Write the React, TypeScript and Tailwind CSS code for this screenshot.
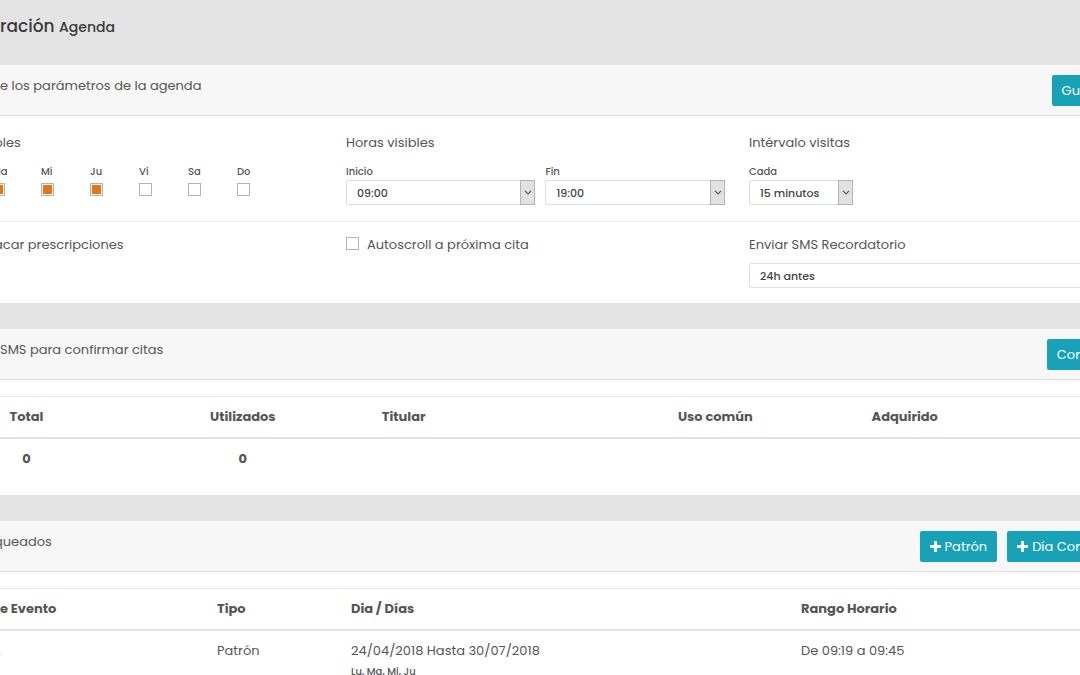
import React from 'react';

interface Day {
  id: string;
  label: string;
  checked: boolean;
}

interface SelectBoxProps {
  id: string;
  value: string;
  arrow?: boolean;
  className?: string;
}

interface CardHeaderProps {
  title: string;
  titleClass?: string;
  children: React.ReactNode;
}

const days: Day[] = [
  { id: 'ma', label: 'Ma', checked: true },
  { id: 'mi', label: 'Mi', checked: true },
  { id: 'ju', label: 'Ju', checked: true },
  { id: 'vi', label: 'Vi', checked: false },
  { id: 'sa', label: 'Sa', checked: false },
  { id: 'do', label: 'Do', checked: false },
];

const checkboxClass =
  'block size-[13px] shrink-0 appearance-none border border-[#b4b4b4] bg-white p-px checked:bg-[#ee720e] checked:bg-clip-content';

const labelClass = 'block text-[10px] leading-[17px] font-medium';

const SelectBox: React.FC<SelectBoxProps> = ({ id, value, arrow = true, className = '' }) => (
  <div className={`relative ${className}`}>
    <select
      id={id}
      defaultValue={value}
      className="block h-[25px] w-full appearance-none rounded-xs border border-[#d9dfe2] bg-white pl-[10px] text-[11px] font-medium text-[#444]"
    >
      <option>{value}</option>
    </select>
    {arrow && (
      <span className="pointer-events-none absolute inset-y-0 right-0 flex w-[15px] items-center justify-center border border-[#b2b4b6] bg-[#e1e1e1]">
        <svg width="8" height="5" viewBox="0 0 8 5" fill="none" stroke="#555" strokeWidth="1.2" className="shrink-0">
          <path d="M1 .8l3 3 3-3" />
        </svg>
      </span>
    )}
  </div>
);

const PlusIcon = () => (
  <svg width="11" height="11" viewBox="0 0 11 11" fill="currentColor" className="shrink-0">
    <path d="M4.7 0h1.6q.7 0 .7.7V4h3.3q.7 0 .7.7v1.6q0 .7-.7.7H7v3.3q0 .7-.7.7H4.7q-.7 0-.7-.7V7H.7Q0 7 0 6.3V4.7Q0 4 .7 4H4V.7Q4 0 4.7 0z" />
  </svg>
);

const buttonClass = 'flex h-[31px] items-center gap-1 bg-[#18a2b8] text-[13px] whitespace-nowrap text-white';

const CardHeader: React.FC<CardHeaderProps> = ({ title, titleClass = '', children }) => (
  <header className="flex items-start justify-between border-b border-[#dedfe0] bg-[#f7f7f7] pt-[10px] pb-[9px]">
    <h2 className={`pt-px ${titleClass}`}>{title}</h2>
    <div className="flex gap-[10px]">{children}</div>
  </header>
);

const App: React.FC = () => {
  return (
    <main className="flex h-screen flex-col gap-[26px] overflow-hidden bg-[#e4e4e4] font-['Poppins','Inter',sans-serif] text-[13px] leading-5 text-[#555]">
      <h1 className="-mb-[26px] shrink-0 pt-[13px] pb-[25px] text-[17px] leading-[27px] font-medium text-[#3a3a3a]">
        ración <small className="text-sm font-medium">Agenda</small>
      </h1>

      <section className="shrink-0 bg-white">
        <CardHeader title="e los parámetros de la agenda">
          <button type="button" className={`${buttonClass} rounded-l-xs pl-[10px]`}>Gu</button>
        </CardHeader>

        <div className="grid grid-cols-[346fr_403fr_331fr] border-b border-[#ebebeb] pt-[17px] pb-4">
          <fieldset>
            <legend className="-ml-[6px]">bles</legend>
            <div className="-ml-2 flex pt-[10px]">
              {days.map((day) => (
                <div key={day.id} className="w-[49px]">
                  <label htmlFor={day.id} className={labelClass}>{day.label}</label>
                  <input id={day.id} type="checkbox" defaultChecked={day.checked} className={`${checkboxClass} mt-[3px]`} />
                </div>
              ))}
            </div>
          </fieldset>
          <fieldset>
            <legend>Horas visibles</legend>
            <div className="flex gap-[10px] pt-[10px] pr-6">
              <div className="flex-[19]">
                <label htmlFor="inicio" className={labelClass}>Inicio</label>
                <SelectBox id="inicio" value="09:00" />
              </div>
              <div className="flex-[18]">
                <label htmlFor="fin" className={labelClass}>Fin</label>
                <SelectBox id="fin" value="19:00" />
              </div>
            </div>
          </fieldset>
          <fieldset>
            <legend>Intérvalo visitas</legend>
            <div className="pt-[10px]">
              <label htmlFor="cada" className={labelClass}>Cada</label>
              <SelectBox id="cada" value="15 minutos" className="w-[104px]" />
            </div>
          </fieldset>
        </div>

        <div className="grid grid-cols-[346fr_403fr_331fr] pt-[13px] pb-[15px]">
          <p className="-ml-[6px]">acar prescripciones</p>
          <div className="flex items-start gap-2">
            <input id="autoscroll" type="checkbox" className={`${checkboxClass} mt-[2px]`} />
            <label htmlFor="autoscroll">Autoscroll a próxima cita</label>
          </div>
          <div>
            <label htmlFor="sms" className="block pb-2">Enviar SMS Recordatorio</label>
            <SelectBox id="sms" value="24h antes" arrow={false} className="-mr-1" />
          </div>
        </div>
      </section>

      <section className="shrink-0 bg-white">
        <CardHeader title="SMS para confirmar citas">
          <button type="button" className={`${buttonClass} rounded-l-xs pl-[10px]`}>Cor</button>
        </CardHeader>
        <div className="-ml-[59px] pt-4 pb-4">
          <table className="w-full table-fixed">
            <thead>
              <tr className="border-t border-b-2 border-t-[#e9e9e9] border-b-[#e2e4e6] text-left">
                <th className="w-[15%] py-[10px] text-center font-bold">Total</th>
                <th className="w-[23%] text-center font-bold">Utilizados</th>
                <th className="w-[26%] pl-2 font-bold">Titular</th>
                <th className="w-[17%] pl-2 font-bold">Uso común</th>
                <th className="pl-2 font-bold">Adquirido</th>
              </tr>
            </thead>
            <tbody>
              <tr className="text-center font-bold">
                <td className="py-[10px]">0</td>
                <td>0</td>
                <td />
                <td />
                <td />
              </tr>
            </tbody>
          </table>
        </div>
      </section>

      <section className="shrink-0 bg-white">
        <CardHeader title="queados" titleClass="-ml-[6px]">
          <button type="button" className={`${buttonClass} rounded-xs px-[10px]`}>
            <PlusIcon />
            Patrón
          </button>
          <button type="button" className={`${buttonClass} rounded-l-xs pl-[10px]`}>
            <PlusIcon />
            Día Cor
          </button>
        </CardHeader>
        <div className="-ml-2 pt-4">
          <table className="w-full table-fixed">
            <thead>
              <tr className="border-t border-b-2 border-t-[#e9e9e9] border-b-[#e0e3e7] text-left">
                <th className="w-[217px] py-[10px] pl-2 font-bold">e Evento</th>
                <th className="w-[134px] pl-2 font-bold">Tipo</th>
                <th className="w-[450px] pl-2 font-bold">Dia / Días</th>
                <th className="pl-2 font-bold">Rango Horario</th>
              </tr>
            </thead>
            <tbody>
              <tr className="align-top">
                <td className="py-[10px] pl-[6px] text-[#18a2b8]">.</td>
                <td className="py-[10px] pl-2">Patrón</td>
                <td className="py-[10px] pl-2">
                  24/04/2018 Hasta 30/07/2018
                  <small className="block pt-px text-[10px] leading-5 font-medium">Lu, Ma, Mi, Ju</small>
                </td>
                <td className="py-[10px] pl-2">De 09:19 a 09:45</td>
              </tr>
            </tbody>
          </table>
        </div>
      </section>
    </main>
  );
};

export default App;
